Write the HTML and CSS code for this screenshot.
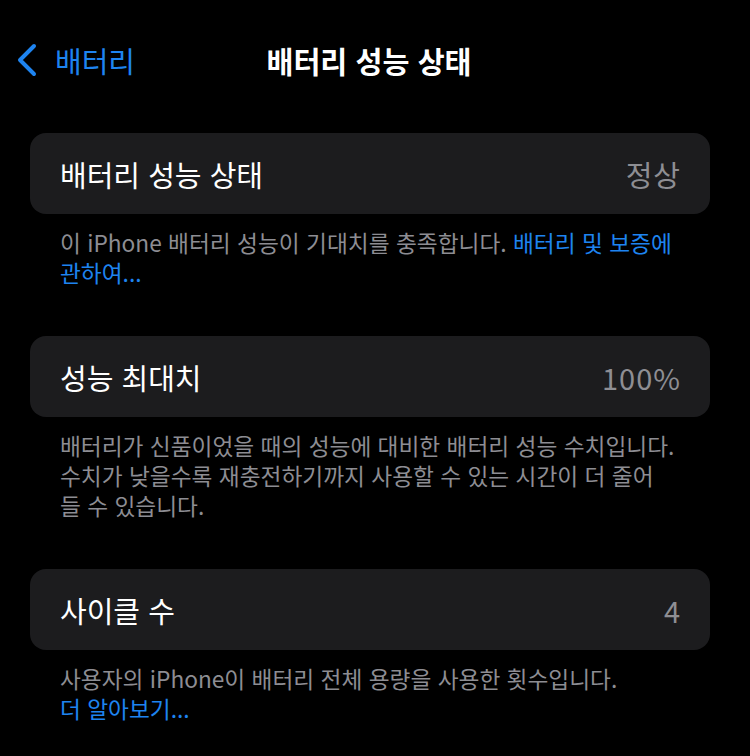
FILE: index.html
```html
<!DOCTYPE html>
<html lang="ko">
<head>
<meta charset="utf-8">
<title>배터리 성능 상태</title>
<link rel="stylesheet" href="styles.css">
</head>
<body>
<div class="screen">
  <header class="nav">
    <a class="back" href="#">
      <svg class="chev" width="22" height="34" viewBox="0 0 22 34" aria-hidden="true">
        <path d="M18 3 L4 17 L18 31" fill="none" stroke="#1e84f0" stroke-width="4" stroke-linecap="round" stroke-linejoin="round"/>
      </svg>
      <span>배터리</span>
    </a>
    <h1 class="title">배터리 성능 상태</h1>
    <span class="spacer"></span>
  </header>

  <main class="content">
    <section class="group">
      <div class="card">
        <span class="label">배터리 성능 상태</span>
        <span class="value">정상</span>
      </div>
      <p class="note">이 iPhone 배터리 성능이 기대치를 충족합니다. <a class="link" href="#">배터리 및 보증에<br>관하여...</a></p>
    </section>

    <section class="group">
      <div class="card">
        <span class="label">성능 최대치</span>
        <span class="value">100%</span>
      </div>
      <p class="note">배터리가 신품이었을 때의 성능에 대비한 배터리 성능 수치입니다.<br>수치가 낮을수록 재충전하기까지 사용할 수 있는 시간이 더 줄어<br>들 수 있습니다.</p>
    </section>

    <section class="group">
      <div class="card">
        <span class="label">사이클 수</span>
        <span class="value">4</span>
      </div>
      <p class="note">사용자의 iPhone이 배터리 전체 용량을 사용한 횟수입니다.<br><a class="link" href="#">더 알아보기...</a></p>
    </section>
  </main>
</div>
</body>
</html>
```

FILE: styles.css
```css
html, body {
  margin: 0;
  padding: 0;
  background: #000;
}

.screen {
  width: 750px;
  height: 756px;
  overflow: hidden;
  background: #000;
  font-family: "Noto Sans CJK KR", "Noto Sans", "Liberation Sans", sans-serif;
  color: #fff;
}

.nav {
  height: 120px;
  display: grid;
  grid-template-columns: 1fr auto 1fr;
  align-items: center;
  padding: 0 0 0 16px;
  box-sizing: border-box;
}

.back {
  display: flex;
  align-items: center;
  gap: 17px;
  color: #1e84f0;
  text-decoration: none;
  font-size: 29px;
  line-height: 34px;
  margin-top: -1px;
}

.chev {
  display: block;
}

.title {
  margin: 0 28px 0 0;
  font-size: 29.3px;
  font-weight: 600;
  line-height: 34px;
  color: #fff;
}

.content {
  padding: 13px 40px 0 30px;
  display: flex;
  flex-direction: column;
  gap: 48px;
}

.card {
  height: 81px;
  background: #1c1c1e;
  border-radius: 16px;
  display: flex;
  align-items: center;
  justify-content: space-between;
  padding: 0 30px;
  box-sizing: border-box;
  font-size: 29px;
}

.label {
  color: #fff;
}

.value {
  color: #8e8e93;
  letter-spacing: 1px;
  margin-right: -1px;
}

.note {
  margin: 0;
  padding: 14px 30px 0 30px;
  font-size: 22.7px;
  line-height: 30px;
  color: #8d8d93;
  white-space: nowrap;
}

.link {
  color: #1e84f0;
  text-decoration: none;
}
```
